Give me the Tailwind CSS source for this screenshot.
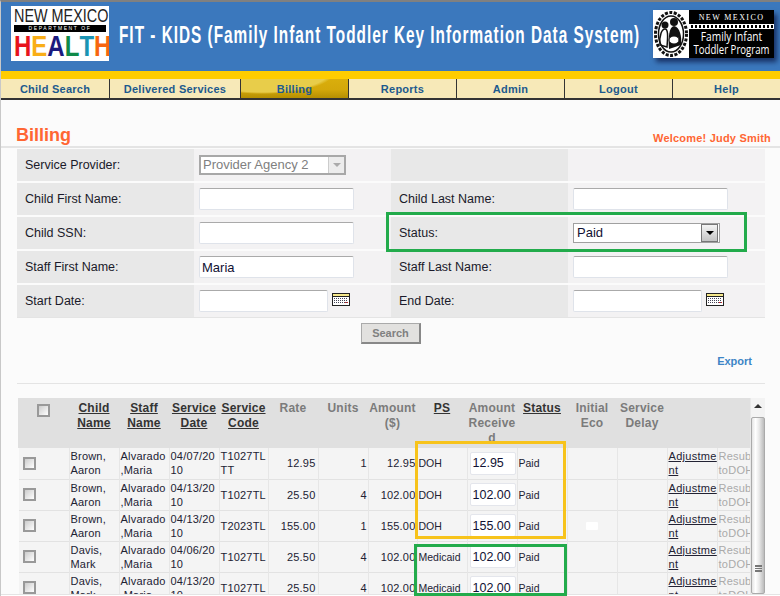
<!DOCTYPE html>
<html lang="en">
<head>
  <meta charset="UTF-8">
  <title>FIT-KIDS Billing</title>
  <script src="https://cdn.jsdelivr.net/npm/@tailwindcss/browser@4"></script>
</head>
<body class="relative w-[780px] h-[596px] overflow-hidden bg-[#fbfbfb] font-['Liberation_Sans',Arial,sans-serif] border-t-2 border-t-[#808080] border-l border-l-[#c8c8c8]">

  <!-- Header -->
  <header class="h-[69px] bg-[#3b78bd] flex items-start relative">
    <div class="ml-[10px] mt-[4px] w-[98px] h-[55px] bg-white px-[3px] pt-[3px] flex flex-col shrink-0 overflow-hidden">
      <div class="text-[18px] leading-[15px] h-[15px] text-[#222] whitespace-nowrap scale-x-[0.8] origin-top-left">NEW MEXICO</div>
      <div class="bg-black text-white text-[5px] leading-[7px] h-[7px] mt-[1px] text-center tracking-[1.6px] whitespace-nowrap overflow-hidden">DEPARTMENT OF</div>
      <div class="font-bold text-[24px] leading-[26px] h-[26px] mt-[1px] flex justify-between scale-y-[1.25] origin-center">
        <span class="text-[#e8141c]">H</span><span class="text-[#f9ae17]">E</span><span class="text-[#1b1a7e]">A</span><span class="text-[#0f8a49]">L</span><span class="text-[#1b94b3]">T</span><span class="text-[#f7660f]">H</span>
      </div>
    </div>
    <h1 class="ml-[10px] mt-[19px] text-white font-bold text-[24px] leading-[28px] whitespace-nowrap tracking-[1.55px] origin-left scale-x-[0.64]">FIT - KIDS (Family Infant Toddler Key Information Data System)</h1>
    <div class="absolute left-[652px] top-[8px] w-[121px] h-[48px] flex bg-black shadow-[3px_4px_5px_rgba(0,0,40,0.6)]">
      <div class="w-[36px] h-[48px] bg-white flex items-center justify-center">
        <svg width="34" height="46" viewBox="0 0 34 46">
          <ellipse cx="17" cy="23" rx="15.5" ry="21.5" fill="#fff" stroke="#111" stroke-width="3" stroke-dasharray="3 1.5"/>
          <ellipse cx="17" cy="23" rx="12.5" ry="18" fill="#fff" stroke="#111" stroke-width="1.5"/>
          <circle cx="11" cy="14" r="3.5" fill="#111"/>
          <circle cx="20" cy="11" r="4" fill="#111"/>
          <path d="M6 34 C5 24 8 18 11 18 C14 18 14 24 13 36 Z" fill="none" stroke="#111" stroke-width="1.5"/>
          <path d="M15 38 C14 26 15 16 20 15 C26 16 28 26 27 34" fill="#111"/>
          <ellipse cx="20" cy="29" rx="5" ry="4" fill="#fff" stroke="#111"/>
        </svg>
      </div>
      <div class="flex-1 text-white text-center overflow-hidden">
        <div class="text-[8px] leading-[9px] mt-[3px] tracking-[1.4px] whitespace-nowrap font-['Liberation_Serif',serif]">NEW MEXICO</div>
        <div class="h-[5px] mt-[2px] border-y border-white bg-[repeating-linear-gradient(90deg,#fff_0,#fff_2px,#000_2px,#000_4px)]"></div>
        <div class="text-[12px] leading-[13px] mt-[1px] whitespace-nowrap font-['Open_Sans',sans-serif] scale-x-[0.85]">Family Infant</div>
        <div class="text-[12px] leading-[13px] whitespace-nowrap font-['Open_Sans',sans-serif] scale-x-[0.8] origin-center -mx-2">Toddler Program</div>
      </div>
    </div>
  </header>
  <div class="h-[8px] bg-[#ffcc00]"></div>

  <!-- Nav -->
  <nav class="h-[21px] bg-[#f7e9b8] border-b-2 border-b-[#333] flex text-[11px] font-bold tracking-[0.25px] text-[#1d5a8e] leading-[20px] text-center">
    <a class="w-[109px] border-r border-r-[#333]">Child Search</a>
    <a class="w-[131px] border-r border-r-[#333]">Delivered Services</a>
    <a class="w-[108px] border-r border-r-[#333] bg-[radial-gradient(ellipse_at_20%_-40%,#e8cd4a_55%,transparent_60%),linear-gradient(#d9ae0c,#d4a80a_55%,#b58f02)]">Billing</a>
    <a class="w-[108px] border-r border-r-[#333]">Reports</a>
    <a class="w-[108px] border-r border-r-[#333]">Admin</a>
    <a class="w-[108px] border-r border-r-[#333]">Logout</a>
    <a class="flex-1">Help</a>
  </nav>

  <main>
    <div class="h-[48px] w-[779px] pl-[15px] pr-[9px] flex justify-between items-end border-b-2 border-b-[#e4e4e4]">
      <h2 class="text-[18px] leading-[20px] font-bold text-[#ff6633] mb-px">Billing</h2>
      <span class="text-[11px] leading-[14px] font-bold tracking-[0.2px] text-[#ff6633] mb-px">Welcome! Judy Smith</span>
    </div>

    <div class="pl-[16px]">
      <!-- Search form -->
      <form class="mt-px w-[748px] grid grid-cols-[177px_197px_177px_197px] auto-rows-[32px] gap-y-[2px] text-[12.5px] text-[#1a1a2a] border-b border-b-[#e4e4e4]">
        <label class="bg-[#e8e8e8] pl-[8px] flex items-center">Service Provider:</label>
        <div class="bg-[#f3f2f3] pl-[5px] flex items-center">
          <div class="w-[147px] h-[20px] border-2 border-[#a8a8a8] bg-white flex text-[#808080] text-[13px] leading-[16px] pl-[2px]">
            <span class="flex-1">Provider Agency 2</span>
            <span class="w-[16px] bg-[#ececec] border-l border-l-[#ccc] flex items-center justify-center"><span class="border-x-[4px] border-x-transparent border-t-[4px] border-t-[#aaa]"></span></span>
          </div>
        </div>
        <div class="bg-[#e8e8e8]"></div>
        <div class="bg-[#f3f2f3]"></div>

        <label class="bg-[#e8e8e8] pl-[8px] flex items-center">Child First Name:</label>
        <div class="bg-[#f3f2f3] pl-[5px] flex items-center"><input class="w-[155px] h-[22px] bg-white border border-[#dfe3ea] border-t-[#aaa] rounded-[2px]"></div>
        <label class="bg-[#e8e8e8] pl-[8px] flex items-center">Child Last Name:</label>
        <div class="bg-[#f3f2f3] pl-[5px] flex items-center"><input class="w-[155px] h-[22px] bg-white border border-[#dfe3ea] border-t-[#aaa] rounded-[2px]"></div>

        <label class="bg-[#e8e8e8] pl-[8px] flex items-center">Child SSN:</label>
        <div class="bg-[#f3f2f3] pl-[5px] flex items-center"><input class="w-[155px] h-[22px] bg-white border border-[#dfe3ea] border-t-[#aaa] rounded-[2px]"></div>
        <label class="bg-[#e8e8e8] pl-[8px] flex items-center">Status:</label>
        <div class="bg-[#f3f2f3] pl-[5px] flex items-center">
          <div class="w-[147px] h-[20px] border border-[#a0a0a0] bg-white flex text-[#111133] text-[13px] leading-[18px] pl-[3px]">
            <span class="flex-1">Paid</span>
            <span class="w-[17px] m-px -my-0 bg-[linear-gradient(#f4f4f4,#c4c4c4)] border border-[#777] flex items-center justify-center"><span class="border-x-[4px] border-x-transparent border-t-[4px] border-t-black"></span></span>
          </div>
        </div>

        <label class="bg-[#e8e8e8] pl-[8px] flex items-center">Staff First Name:</label>
        <div class="bg-[#f3f2f3] pl-[5px] flex items-center"><input value="Maria" class="w-[155px] h-[22px] bg-white border border-[#dfe3ea] border-t-[#aaa] rounded-[2px] pl-[2px] text-[13px] text-[#111133]"></div>
        <label class="bg-[#e8e8e8] pl-[8px] flex items-center">Staff Last Name:</label>
        <div class="bg-[#f3f2f3] pl-[5px] flex items-center"><input class="w-[155px] h-[22px] bg-white border border-[#dfe3ea] border-t-[#aaa] rounded-[2px]"></div>

        <label class="bg-[#e8e8e8] pl-[8px] flex items-center">Start Date:</label>
        <div class="bg-[#f3f2f3] pl-[5px] flex items-center gap-[4px]">
          <input class="w-[129px] h-[22px] bg-white border border-[#dfe3ea] border-t-[#aaa] rounded-[2px]">
          <svg width="18" height="13" viewBox="0 0 18 13" class="-mt-[3px]"><rect x=".5" y=".5" width="17" height="12" fill="#fff" stroke="#222"/><rect x="1" y="1" width="16" height="2" fill="#f6e88a"/><path d="M1 3.5h16" stroke="#222"/><path d="M2 5.5h14M2 7.5h14M2 9.5h14" stroke="#445" stroke-dasharray="1 1"/><path d="M13 9.5h3" stroke="#d22" stroke-dasharray="1 1"/></svg>
        </div>
        <label class="bg-[#e8e8e8] pl-[8px] flex items-center">End Date:</label>
        <div class="bg-[#f3f2f3] pl-[5px] flex items-center gap-[4px]">
          <input class="w-[129px] h-[22px] bg-white border border-[#dfe3ea] border-t-[#aaa] rounded-[2px]">
          <svg width="18" height="13" viewBox="0 0 18 13" class="-mt-[3px]"><rect x=".5" y=".5" width="17" height="12" fill="#fff" stroke="#222"/><rect x="1" y="1" width="16" height="2" fill="#f6e88a"/><path d="M1 3.5h16" stroke="#222"/><path d="M2 5.5h14M2 7.5h14M2 9.5h14" stroke="#445" stroke-dasharray="1 1"/><path d="M13 9.5h3" stroke="#d22" stroke-dasharray="1 1"/></svg>
        </div>
      </form>

      <div class="w-[748px] h-[65px] border-b border-b-[#e4e4e4] box-content">
        <div class="flex justify-center pt-[5px]">
          <button type="button" class="w-[60px] h-[21px] bg-[#e2e1df] border border-r-2 border-b-2 border-r-[#888] border-b-[#888] border-t-[#aaa] border-l-[#aaa] text-[11px] font-bold text-[#808080]">Search</button>
        </div>
        <a class="block text-right pr-[13px] mt-[10px] text-[11px] leading-[14px] font-bold text-[#3d85c6]">Export</a>
      </div>

      <!-- Results grid -->
      <div class="mt-[14px] w-[748px] h-[196px] overflow-hidden flex">
        <div class="w-[733px]">
          <table class="table-fixed w-[733px] border-collapse text-[11px] leading-[14px] text-[#222233]">
            <colgroup>
              <col class="w-[51px]"><col class="w-[50px]"><col class="w-[50px]"><col class="w-[50px]"><col class="w-[49px]"><col class="w-[50px]"><col class="w-[50px]"><col class="w-[49px]"><col class="w-[50px]"><col class="w-[50px]"><col class="w-[50px]"><col class="w-[50px]"><col class="w-[50px]"><col class="w-[50px]"><col class="w-[34px]">
            </colgroup>
            <thead>
              <tr class="h-[50px] bg-[#e0e0e0] text-[12px] leading-[15px] font-bold tracking-[0.2px] text-[#7b7b7b] text-center align-top">
                <th class="pt-[6px] align-top"><span class="block ml-[19px] w-[13px] h-[13px] border-2 border-[#999] bg-[linear-gradient(135deg,#ccc,#fff)]"></span></th>
                <th class="pt-[3px] align-top underline text-[#333]">Child Name</th>
                <th class="pt-[3px] align-top underline text-[#333]">Staff Name</th>
                <th class="pt-[3px] align-top underline text-[#333]">Service Date</th>
                <th class="pt-[3px] align-top underline text-[#333]">Service Code</th>
                <th class="pt-[3px] align-top">Rate</th>
                <th class="pt-[3px] align-top">Units</th>
                <th class="pt-[3px] align-top">Amount ($)</th>
                <th class="pt-[3px] align-top underline text-[#333]">PS</th>
                <th class="pt-[3px] align-top h-[50px]"><div class="h-[47px] overflow-hidden">Amount Receive<br>d</div></th>
                <th class="pt-[3px] align-top underline text-[#333]">Status</th>
                <th class="pt-[3px] align-top">Initial Eco</th>
                <th class="pt-[3px] align-top">Service Delay</th>
                <th></th>
                <th></th>
              </tr>
            </thead>
            <tbody id="rows"></tbody>
          </table>
        </div>
        <!-- Scrollbar -->
        <div class="w-[15px] bg-[#f3f3f3] flex flex-col items-center border-l border-l-[#e8e8e8]">
          <span class="mt-[6px] border-x-[4px] border-x-transparent border-b-[4px] border-b-[#333]"></span>
          <div class="mt-[9px] flex-1 w-[14px] bg-[linear-gradient(90deg,#e4e4e4,#fff_30%,#e8e8e8_60%,#bbb)] border border-[#aaa] rounded-[2px] flex items-end justify-center pb-[21px]">
            <span class="w-[7px] h-[7px] border-y border-[#777] bg-[linear-gradient(#777_1px,transparent_1px,transparent_2px)] bg-[length:100%_2px]"></span>
          </div>
        </div>
      </div>
    </div>
  </main>
  <div class="h-[2px] border-t border-t-[#e4e4e4] bg-white"></div>

  <!-- Highlight boxes over the form and the grid -->
  <div class="absolute left-[385px] top-[210px] w-[361px] h-[40px] border-[3px] border-[#22ab4b] pointer-events-none"></div>
  <div class="absolute left-[414px] top-[439px] w-[151px] h-[98px] border-[3px] border-[#f7c31b] pointer-events-none"></div>
  <div class="absolute left-[413px] top-[542px] w-[153px] h-[52px] border-[3px] border-[#22ab4b] pointer-events-none"></div>

  <script>
    const rows = [
      { child: "Brown,<br>Aaron", date: "04/07/20<br>10", code: "T1027TL<br>TT", rate: "12.95", units: "1", amount: "12.95", ps: "DOH", recv: "12.95" },
      { child: "Brown,<br>Aaron", date: "04/13/20<br>10", code: "T1027TL", rate: "25.50", units: "4", amount: "102.00", ps: "DOH", recv: "102.00" },
      { child: "Brown,<br>Aaron", date: "04/13/20<br>10", code: "T2023TL", rate: "155.00", units: "1", amount: "155.00", ps: "DOH", recv: "155.00", eco: true },
      { child: "Davis,<br>Mark", date: "04/06/20<br>10", code: "T1027TL", rate: "25.50", units: "4", amount: "102.00", ps: "Medicaid", recv: "102.00" },
      { child: "Davis,<br>Mark", date: "04/13/20<br>10", code: "T1027TL", rate: "25.50", units: "4", amount: "102.00", ps: "Medicaid", recv: "102.00" }
    ];
    document.getElementById("rows").innerHTML = rows.map(r => `
      <tr class="h-[31px] bg-[#f4f4f4] border-b border-b-[#e2e2e2]">
        <td class="border-l-2 border-l-[#fbfbfb] pl-[4px] border-r border-r-[#e6e6e6]"><span class="block w-[13px] h-[13px] border-2 border-[#999] bg-[linear-gradient(135deg,#ccc,#fff)]"></span></td>
        <td class="pl-[1px] border-r border-r-[#e6e6e6] tracking-[0.2px]">${r.child}</td>
        <td class="pl-[1px] border-r border-r-[#e6e6e6] tracking-[0.2px]">Alvarado<br>,Maria</td>
        <td class="pl-[1px] border-r border-r-[#e6e6e6] tracking-[0.2px]">${r.date}</td>
        <td class="pl-[1px] border-r border-r-[#e6e6e6] tracking-[0.2px]">${r.code}</td>
        <td class="pr-[2px] text-right border-r border-r-[#e6e6e6] tracking-[0.2px]">${r.rate}</td>
        <td class="pr-[1px] text-right border-r border-r-[#e6e6e6]">${r.units}</td>
        <td class="pr-px text-right border-r border-r-[#e6e6e6] tracking-[0.2px]">${r.amount}</td>
        <td class="pl-[1px] border-r border-r-[#e6e6e6] text-[10.5px]">${r.ps}</td>
        <td class="pl-[2px] border-r border-r-[#e6e6e6]"><input value="${r.recv}" class="w-[46px] h-[23px] bg-white border border-[#e4e6ec] rounded-[2px] pl-[2px] text-[12.5px] text-[#111133]"></td>
        <td class="pl-[1px] border-r border-r-[#e6e6e6] text-[10.5px]">Paid</td>
        <td class="border-r border-r-[#e6e6e6]">${r.eco ? '<span class="block mx-auto w-[12px] h-[8px] bg-white rounded-[1px]"></span>' : ''}</td>
        <td class="border-r border-r-[#e6e6e6]"></td>
        <td class="pl-[1px] border-r border-r-[#e6e6e6] underline tracking-[0.3px]">Adjustme<br>nt</td>
        <td class="pl-[1px] text-[#aaaaaa] whitespace-nowrap overflow-hidden tracking-[0.2px] [word-spacing:-3px]">Resub<br>to DOH</td>
      </tr>`).join("");
  </script>
</body>
</html>
